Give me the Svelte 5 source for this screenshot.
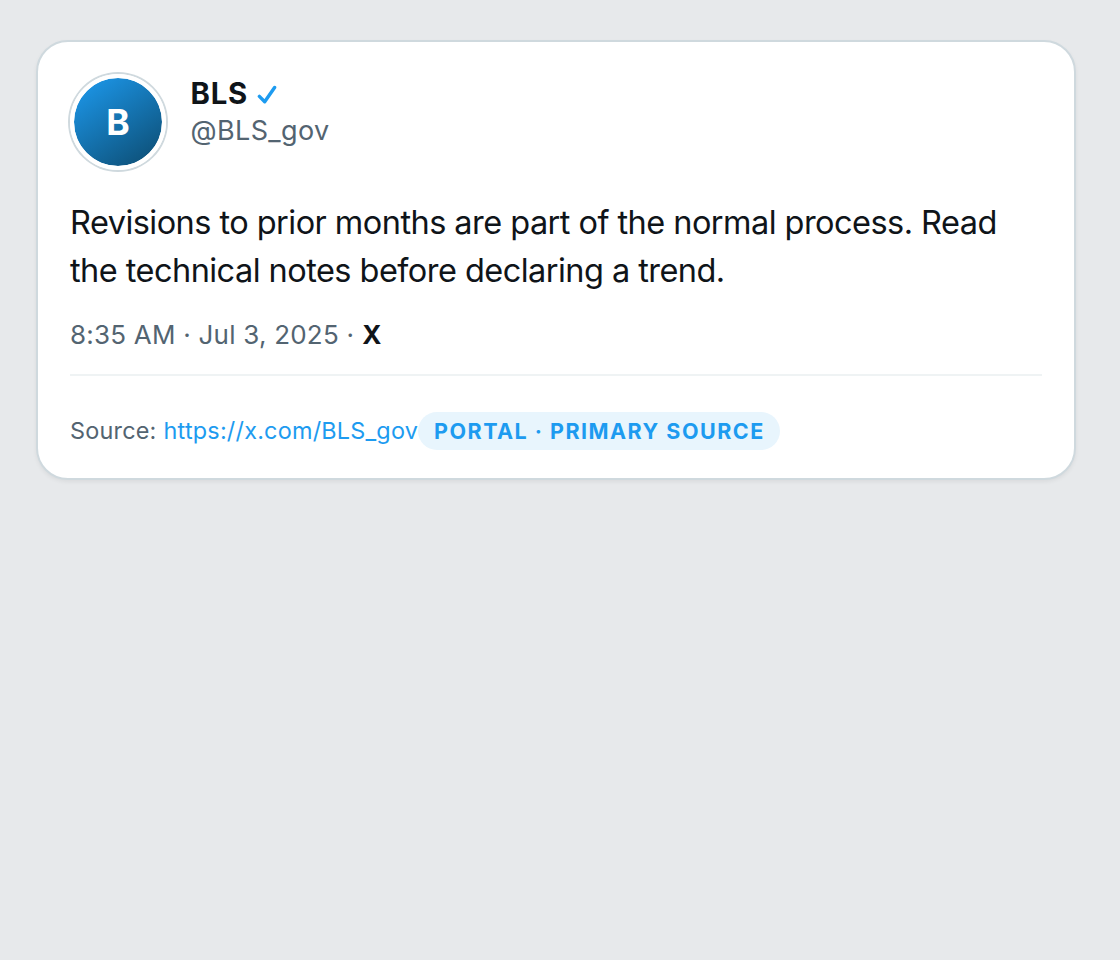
<script lang="ts">
  interface Post {
    name: string;
    handle: string;
    text: string;
    time: string;
    url: string;
    badge: string;
  }

  const post: Post = {
    name: 'BLS',
    handle: '@BLS_gov',
    text: 'Revisions to prior months are part of the normal process. Read the technical notes before declaring a trend.',
    time: '8:35 AM · Jul 3, 2025 ·',
    url: 'https://x.com/BLS_gov',
    badge: 'Portal · Primary source'
  };
</script>

<article class="card">
  <header class="header">
    <div class="avatar">{post.name[0]}</div>
    <div class="author">
      <div class="name-row">
        <span class="name">{post.name}</span>
        <svg class="check" viewBox="0 0 22 20" aria-hidden="true">
          <path d="M2.4 11.4 L7.7 16.8 L17.6 2.5" />
        </svg>
      </div>
      <div class="handle">{post.handle}</div>
    </div>
  </header>

  <p class="text">{post.text}</p>

  <div class="meta">
    <span class="time">{post.time}</span>
    <span class="brand">X</span>
  </div>

  <footer class="source">
    <span class="label">Source:</span>
    <a class="link" href={post.url}>{post.url}</a>
    <span class="badge">{post.badge}</span>
  </footer>
</article>

<style>
  :global(body) {
    background: #e7e9eb;
  }

  .card {
    box-sizing: border-box;
    width: 1040px;
    height: 440px;
    margin: 40px 36px;
    padding: 32px;
    background: #fff;
    border: 2px solid #cfd9de;
    border-radius: 32px;
    box-shadow: 0 2px 4px rgba(15, 20, 25, 0.06);
    font-family: Inter, 'Liberation Sans', sans-serif;
    color: #0f1419;
  }

  .header {
    display: flex;
    gap: 24.6px;
  }

  .avatar {
    box-sizing: border-box;
    display: flex;
    align-items: center;
    justify-content: center;
    width: 96px;
    height: 96px;
    border: 4px solid #fff;
    border-radius: 50%;
    background: linear-gradient(145deg, #1d9bf0, #0c4a6e) padding-box;
    box-shadow: 0 0 0 2px #cfd9de;
    color: #fff;
    font-size: 35.5px;
    font-weight: 700;
  }

  .name-row {
    display: flex;
    align-items: center;
    gap: 9px;
    height: 39px;
  }

  .name {
    font-size: 29.3px;
    font-weight: 700;
    letter-spacing: 0.7px;
  }

  .check {
    width: 22px;
    height: 20px;
    margin-top: 2px;
    fill: none;
    stroke: #1d9bf0;
    stroke-width: 3.4;
    stroke-linecap: round;
    stroke-linejoin: round;
  }

  .handle {
    color: #536471;
    font-size: 27px;
    line-height: 36px;
    letter-spacing: 0.35px;
  }

  .text {
    margin: 29px 0 0;
    font-size: 32.5px;
    line-height: 48px;
    letter-spacing: -0.545px;
  }

  .meta {
    display: flex;
    gap: 8px;
    margin-top: 23px;
    padding-bottom: 22px;
    border-bottom: 2px solid #eff3f4;
    color: #536471;
    font-size: 26px;
    line-height: 34px;
  }

  .time {
    letter-spacing: 0.22px;
  }

  .brand {
    color: #0f1419;
    font-weight: 700;
  }

  .source {
    display: flex;
    align-items: center;
    margin-top: 36px;
    color: #536471;
    font-size: 23.4px;
    line-height: 38px;
    letter-spacing: 0.22px;
  }

  .label {
    margin-right: 7px;
  }

  .link {
    color: #1d9bf0;
    text-decoration: none;
  }

  .badge {
    padding: 0 15px 0 16px;
    border-radius: 19px;
    background: #e8f5fd;
    color: #1d9bf0;
    font-size: 21.5px;
    font-weight: 700;
    letter-spacing: 1.48px;
    text-transform: uppercase;
  }
</style>
